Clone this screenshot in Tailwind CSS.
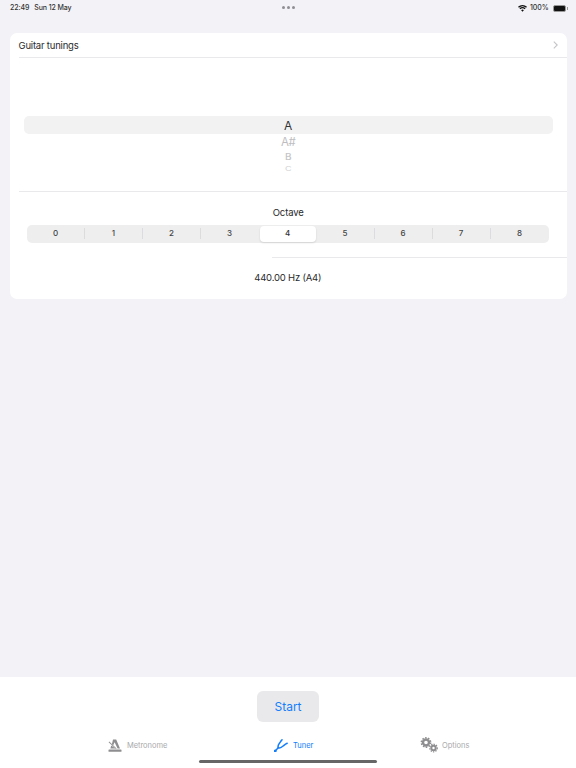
<!DOCTYPE html>
<html lang="en">
<head>
    <meta charset="UTF-8">
    <meta name="viewport" content="width=device-width, initial-scale=1.0">
    <title>Tuner</title>
    <script src="https://cdn.jsdelivr.net/npm/@tailwindcss/browser@4"></script>
</head>
<body class="bg-[#f2f2f7] font-['Inter',sans-serif] text-[#2a2a2c] w-[576px] h-[768px] overflow-hidden flex flex-col">

    <!-- status bar -->
    <div class="h-[14px] pt-[2px] shrink-0 flex items-center justify-between pl-[10px] pr-[8.5px] text-[7px] tracking-[-0.1px] font-medium text-[#333] relative">
        <div class="flex gap-[5px]"><span>22:49</span><span>Sun 12 May</span></div>
        <div class="absolute left-[282px] top-[5.5px] flex gap-[2px]">
            <span class="w-[3px] h-[3px] rounded-full bg-[#8e8e93]"></span>
            <span class="w-[3px] h-[3px] rounded-full bg-[#8e8e93]"></span>
            <span class="w-[3px] h-[3px] rounded-full bg-[#8e8e93]"></span>
        </div>
        <div class="flex items-center gap-[3px]">
            <svg width="9" height="7" viewBox="0 0 18 14" fill="#111"><path d="M9 13.5 6.3 10.4a4 4 0 0 1 5.4 0zM4.6 8.6 2.9 6.7a9 9 0 0 1 12.2 0l-1.7 1.9a6.5 6.5 0 0 0-8.8 0zM1.9 5.6 0 3.6a13.2 13.2 0 0 1 18 0l-1.9 2a10.5 10.5 0 0 0-14.2 0z"/></svg>
            <span>100%</span>
            <div class="flex items-center gap-[1px] ml-[1px]">
                <div class="w-[13px] h-[7px] rounded-[2px] bg-[#111] border border-[#999]"></div>
                <div class="w-[1px] h-[3px] bg-[#999]"></div>
            </div>
        </div>
    </div>

    <!-- main -->
    <main class="grow pt-[19px] pl-[9.5px] pr-[9px]">
        <section class="bg-white rounded-[7px] h-[266px] flex flex-col overflow-hidden">
            <div class="h-[25px] shrink-0 ml-[9px] border-b border-[#e9e9ec] flex items-center justify-between pr-[9px] pt-[2px]">
                <span class="text-[9.5px] tracking-[-0.2px]">Guitar tunings</span>
                <svg class="-mt-[2px]" width="5" height="8" viewBox="0 0 5 8" fill="none" stroke="#c4c4c7" stroke-width="1.1"><path d="M.8.7 4.2 4 .8 7.3"/></svg>
            </div>

            <!-- note picker -->
            <div class="h-[134px] shrink-0 ml-[9px] border-b border-[#e9e9ec] pt-[58px] pr-[14px] pl-[5px]">
                <div class="h-[18px] pt-[1px] bg-[#f2f2f3] rounded-[5px] flex items-center justify-center text-[12px] text-[#333]">A</div>
                <div class="flex flex-col items-center h-[40px] overflow-hidden -mt-[1px]">
                    <span class="text-[11.5px] leading-[16px] mt-[1px] tracking-[-0.3px] text-[#bdbdbf]">A#</span>
                    <span class="text-[10px] leading-[12px] mt-[1px] text-[#c4c4c6] font-medium scale-y-[0.85]">B</span>
                    <span class="text-[9px] leading-[9px] mt-[1px] text-[#d0d0d2] scale-y-[0.65]">C</span>
                    <span class="text-[9px] leading-[5px] text-[#e2e2e4] scale-y-[0.35]">C#</span>
                </div>
            </div>

            <!-- octave -->
            <div class="h-[65px] shrink-0 relative flex flex-col items-center">
                <div class="text-[9.5px] tracking-[-0.1px] leading-[12px] mt-[14.5px]">Octave</div>
                <div class="mt-[6.5px] w-[522px] ml-[-1.5px] h-[17.5px] bg-[#eeeeef] rounded-[5px] grid grid-cols-9 items-center text-[8px] font-medium text-[#444] text-center">
                    <div class="border-r border-[#dcdcde] h-[11px] leading-[11px] pl-[1px]">0</div>
                    <div class="border-r border-[#dcdcde] h-[11px] leading-[11px] pl-[1px]">1</div>
                    <div class="border-r border-[#dcdcde] h-[11px] leading-[11px] pl-[1px]">2</div>
                    <div class="h-[11px] leading-[11px]">3</div>
                    <div class="h-[15.5px] leading-[15.5px] mx-[1px] bg-white rounded-[4px] shadow-[0_1px_2px_rgba(0,0,0,0.12)] text-[#333]">4</div>
                    <div class="border-r border-[#dcdcde] h-[11px] leading-[11px]">5</div>
                    <div class="border-r border-[#dcdcde] h-[11px] leading-[11px]">6</div>
                    <div class="border-r border-[#dcdcde] h-[11px] leading-[11px]">7</div>
                    <div class="h-[11px] leading-[11px]">8</div>
                </div>
            </div>

            <div class="h-[1px] ml-[262.5px] bg-[#e9e9ec] shrink-0"></div>
            <div class="grow flex items-center justify-center text-[9.5px] tracking-[-0.2px] ml-[-1px]">440.00 Hz (A4)</div>
        </section>
    </main>

    <!-- bottom bar -->
    <footer class="h-[91px] shrink-0 bg-white flex flex-col items-center relative">
        <button class="mt-[14px] w-[62px] h-[31px] bg-[#e9e9eb] rounded-[6px] text-[#147efb] text-[12px]">Start</button>
        <nav class="w-full h-[16px] mt-[15px] relative flex text-[7.5px] text-[#a9a9ab]">
            <div class="absolute left-[108px] top-[2px] flex items-center gap-[5px]">
                <svg width="14" height="13" viewBox="0 0 14 13" fill="#8e8e90">
                    <path d="M5 0.5h3.2L12 9.5H9.6L6.6 3.2 5.2 6.3 3.9 5.2z"/>
                    <path d="M3.2 6.5 7.6 9.5H2.4z"/>
                    <path d="m1.2 2.6 7.4 6.9-.6.6L.6 3.2z"/>
                    <rect x="0.5" y="10.5" width="13" height="2.3" rx="0.6"/>
                </svg>
                <span class="tracking-[-0.05px] mt-[1px]">Metronome</span>
            </div>
            <div class="absolute left-[274px] top-[2px] flex items-center gap-[5px] text-[#147efb]">
                <svg width="14" height="13" viewBox="0 0 14 13" fill="none" stroke="#147efb" stroke-width="1.5" stroke-linecap="round" stroke-linejoin="round">
                    <path d="M1.2 12 4.4 8.6"/>
                    <path d="M4.4 8.6C3 6.6 5.2 4.8 6.2 3.2 6.8 2.2 7.2 1.4 8 .8"/>
                    <path d="M4.4 8.6C6.4 9.8 8 8 9.6 6.6 10.8 5.6 11.8 4.8 13.2 4.2"/>
                    <circle cx="1.2" cy="12" r="0.7" fill="#147efb"/>
                </svg>
                <span class="mt-[1px]">Tuner</span>
            </div>
            <div class="absolute left-[420px] top-0 flex items-center gap-[3px]">
                <svg width="19" height="16" viewBox="0 0 19 16" fill="none" stroke="#8e8e90">
                    <circle cx="6" cy="5.5" r="3" stroke-width="2.4"/>
                    <circle cx="6" cy="5.5" r="4.7" stroke-width="1.4" stroke-dasharray="1.6 1.35"/>
                    <circle cx="13.5" cy="11" r="2.2" stroke-width="2"/>
                    <circle cx="13.5" cy="11" r="3.8" stroke-width="1.2" stroke-dasharray="1.4 1.1"/>
                </svg>
                <span class="mt-[1px]">Options</span>
            </div>
        </nav>
        <div class="absolute left-[199px] top-[83px] w-[178px] h-[3px] rounded-full bg-[#666]"></div>
    </footer>
</body>
</html>
